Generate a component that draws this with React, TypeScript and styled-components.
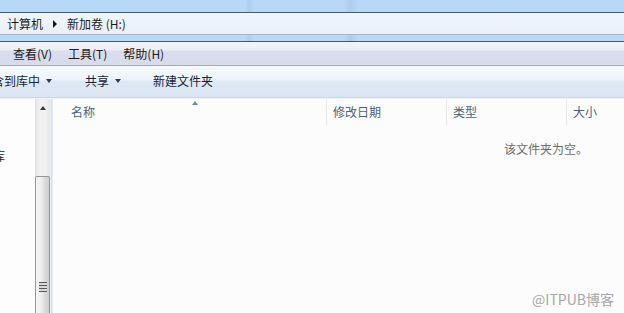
import React from "react";
import styled, { createGlobalStyle } from "styled-components";

const Global = createGlobalStyle`
  html, body { margin: 0; padding: 0; background: #fcfcfc; overflow: hidden; }
  * { box-sizing: border-box; }
`;

const FONT = `"Noto Sans CJK SC", "Noto Sans", sans-serif`;

const Window = styled.div`
  width: 624px;
  height: 313px;
  display: flex;
  flex-direction: column;
  font-family: ${FONT};
  font-size: 12px;
  overflow: hidden;
  background: #fcfcfc;
`;

const GlassStrip = styled.div<{ $h: number }>`
  height: ${(p) => p.$h}px;
  flex: none;
  background:
    linear-gradient(90deg, transparent 245px, rgba(150,170,200,0.25) 249px, transparent 254px,
      transparent 344px, rgba(150,170,200,0.25) 350px, transparent 358px),
    #b8d8f7;
  border-bottom: 1px solid #4d5866;
`;

const AddressBar = styled.div`
  height: 22px;
  flex: none;
  display: flex;
  align-items: center;
  padding-left: 7px;
  gap: 10px;
  color: #1c1c1c;
  background: linear-gradient(#eef5fd, #e8f1fb);
  border-bottom: 1px solid #a8b6c6;
`;

const Crumb = styled.span`
  line-height: 16px;
`;

const CrumbArrow = styled.span`
  width: 0;
  height: 0;
  border-top: 4px solid transparent;
  border-bottom: 4px solid transparent;
  border-left: 4px solid #1a1a1a;
`;

const MenuBar = styled.div`
  height: 24px;
  flex: none;
  display: flex;
  align-items: center;
  padding-left: 13px;
  gap: 16px;
  color: #1a1a1a;
  background: linear-gradient(#f3f4fa 0px, #eceef6 8px, #dadded 9px, #d8dbec 100%);
  border-bottom: 1px solid #a4acbb;
`;

const MenuItem = styled.span`
  line-height: 16px;
`;

const Toolbar = styled.div`
  height: 32px;
  flex: none;
  display: flex;
  align-items: center;
  color: #1a2433;
  background: linear-gradient(#f6fafe 0px, #eef4fc 14px, #dfe8f5 15px, #dbe5f3 100%);
  border-bottom: 1px solid #c9d6e6;
  padding-bottom: 1px;
`;

const ToolButton = styled.span<{ $offset: number }>`
  display: flex;
  align-items: center;
  gap: 6px;
  margin-left: ${(p) => p.$offset}px;
  line-height: 16px;
  white-space: nowrap;
`;

const DropArrow = styled.span`
  width: 0;
  height: 0;
  border-left: 3.5px solid transparent;
  border-right: 3.5px solid transparent;
  border-top: 4px solid #2a3a50;
`;

const Body = styled.div`
  flex: 1;
  display: flex;
  min-height: 0;
  border-top: 1px solid #eef3f9;
`;

const NavPane = styled.div`
  width: 35px;
  flex: none;
  background: #fdfdfd;
  overflow: hidden;
  display: flex;
  flex-direction: column;
`;

const NavItem = styled.div<{ $top: number }>`
  margin-top: ${(p) => p.$top}px;
  margin-left: -7px;
  line-height: 18px;
  white-space: nowrap;
  color: #141a4a;
  font-size: 12px;
`;

const ScrollBar = styled.div`
  width: 15px;
  flex: none;
  display: flex;
  flex-direction: column;
  background: linear-gradient(90deg, #e6e6e6, #f1f1f1 30%, #f1f1f1 70%, #e6e6e6);
  border-left: 1px solid #e0e0e0;
`;

const ScrollButton = styled.div`
  height: 17px;
  flex: none;
  display: flex;
  justify-content: center;
  padding-top: 7px;
`;

const UpArrow = styled.span`
  width: 0;
  height: 0;
  border-left: 3.5px solid transparent;
  border-right: 3.5px solid transparent;
  border-bottom: 4px solid #3a3a3a;
`;

const Track = styled.div`
  height: 60px;
  flex: none;
`;

const Thumb = styled.div`
  flex: 1;
  margin: 0 0 0 -1px;
  border: 1px solid #979797;
  border-bottom: none;
  border-radius: 2px 2px 0 0;
  background: linear-gradient(90deg, #f5f5f5, #ececec 45%, #d9d9d9 70%, #cfcfcf);
  display: flex;
  justify-content: center;
  padding-top: 105px;
`;

const Grip = styled.div`
  width: 8px;
  height: 10px;
  background: repeating-linear-gradient(#5a5a5a 0px, #5a5a5a 1px, #d8d8d8 1px, #d8d8d8 3px);
`;

const Splitter = styled.div`
  width: 3px;
  flex: none;
  background: linear-gradient(90deg, #f4f7fb, #d3e2f3 50%, #e8eff8);
`;

const Main = styled.div`
  flex: 1;
  position: relative;
  background: #fcfcfc;
  display: flex;
  flex-direction: column;
`;

const HeaderRow = styled.div`
  height: 26px;
  display: flex;
  flex: none;
  color: #4c5f7a;
`;

const HeaderCell = styled.div<{ $w?: number; $first?: boolean }>`
  position: relative;
  width: ${(p) => (p.$w ? `${p.$w}px` : "auto")};
  flex: ${(p) => (p.$w ? "none" : "1")};
  padding-left: ${(p) => (p.$first ? 18 : 6)}px;
  display: flex;
  align-items: center;
  border-left: ${(p) => (p.$first ? "none" : "1px solid #e7ebf0")};
  line-height: 16px;
`;

const SortArrow = styled.span`
  position: absolute;
  top: 2px;
  left: 139px;
  width: 0;
  height: 0;
  border-left: 3.5px solid transparent;
  border-right: 3.5px solid transparent;
  border-bottom: 4px solid #6c8bb0;
`;

const EmptyText = styled.div`
  padding: 17px 0 0 451px;
  line-height: 14px;
  color: #6d6d6d;
  white-space: nowrap;
`;

const Watermark = styled.div`
  position: absolute;
  right: 10px;
  bottom: 7px;
  font-family: "Noto Sans CJK SC", "Liberation Sans", sans-serif;
  font-size: 14px;
  color: #a7a7a7;
  line-height: 14px;
`;

export default function App() {
  return (
    <>
      <Global />
      <Window>
        <GlassStrip $h={13} />
        <AddressBar>
          <Crumb>计算机</Crumb>
          <CrumbArrow />
          <Crumb>新加卷 (H:)</Crumb>
        </AddressBar>
        <GlassStrip $h={7} />
        <MenuBar>
          <MenuItem>查看(V)</MenuItem>
          <MenuItem>工具(T)</MenuItem>
          <MenuItem>帮助(H)</MenuItem>
        </MenuBar>
        <Toolbar>
          <ToolButton $offset={-20}>
            <span>包含到库中</span>
            <DropArrow />
          </ToolButton>
          <ToolButton $offset={33}>
            <span>共享</span>
            <DropArrow />
          </ToolButton>
          <ToolButton $offset={32}>新建文件夹</ToolButton>
        </Toolbar>
        <Body>
          <NavPane>
            <NavItem $top={48}>库</NavItem>
          </NavPane>
          <ScrollBar>
            <ScrollButton>
              <UpArrow />
            </ScrollButton>
            <Track />
            <Thumb>
              <Grip />
            </Thumb>
          </ScrollBar>
          <Splitter />
          <Main>
            <HeaderRow>
              <HeaderCell $w={273} $first>
                名称
                <SortArrow />
              </HeaderCell>
              <HeaderCell $w={120}>修改日期</HeaderCell>
              <HeaderCell $w={120}>类型</HeaderCell>
              <HeaderCell>大小</HeaderCell>
            </HeaderRow>
            <EmptyText>该文件夹为空。</EmptyText>
            <Watermark>@ITPUB博客</Watermark>
          </Main>
        </Body>
      </Window>
    </>
  );
}
